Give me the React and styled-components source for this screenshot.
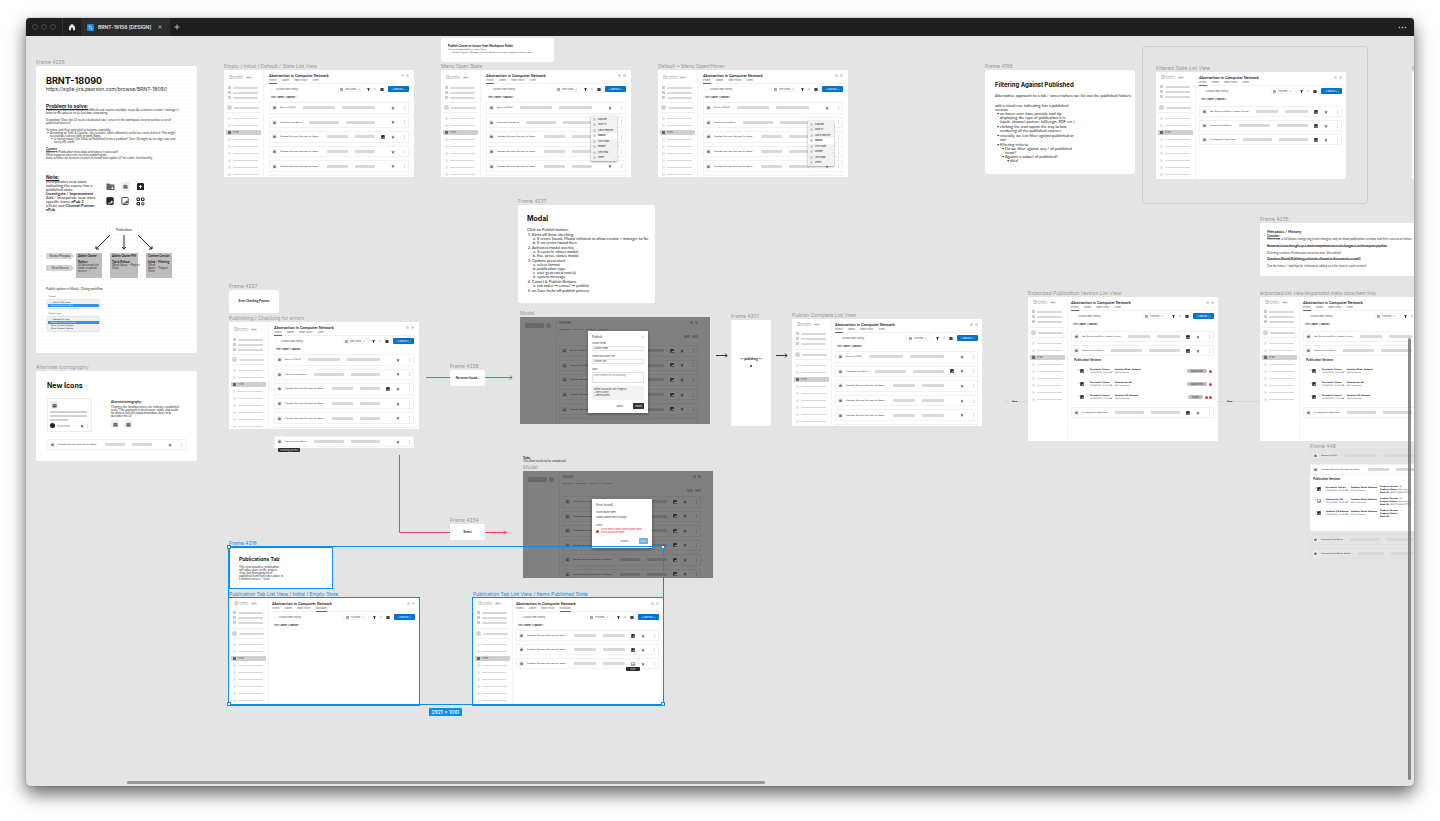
import React from "react";
import styled, { createGlobalStyle, css } from "styled-components";

const INTER = `Inter, "Liberation Sans", sans-serif`;
const WIDE = `"DejaVu Sans", "Liberation Sans", sans-serif`;
const NOTE = `Lato, "Liberation Sans", sans-serif`;
const BLUE = "#0d8ce9";
const ACTION = "#0073cf";

const Global = createGlobalStyle`
  *, *::before, *::after { box-sizing: border-box; }
  body { margin: 0; background: #fff; font-family: ${INTER}; color: #222; }
  button, input, select, textarea { font-family: inherit; margin: 0; padding: 0; border: 0; border-radius: 0; background: none; color: inherit; appearance: none; }
  h1, h2, h3, p, ul, ol { margin: 0; padding: 0; font-weight: inherit; font-size: inherit; }
  svg { display: block; flex: none; }
`;

/* ---------- window ---------- */
const Page = styled.div`
  min-height: 100vh;
  display: flex;
  flex-direction: column;
  padding: 18px 26px 35px;
`;
const Window = styled.div`
  flex: 1;
  display: flex;
  flex-direction: column;
  border-radius: 4px;
  overflow: hidden;
  background: #e4e4e4;
  box-shadow: 0 0 1px rgba(0, 0, 0, 0.7), 0 8px 18px rgba(0, 0, 0, 0.6);
`;
const TitleBar = styled.header`
  height: 18px;
  flex: none;
  display: flex;
  align-items: stretch;
  background: #1e1e1e;
  color: #e6e6e6;
`;
const Lights = styled.div`
  display: flex;
  align-items: center;
  gap: 3px;
  padding: 0 6px;
  border-right: 1px solid #333;
`;
const Light = styled.button`
  && { width: 6px; height: 6px; border: 1px solid #484848; border-radius: 50%; }
`;
const BarButton = styled.button`
  width: ${(p) => p.$w || 18}px;
  display: flex;
  align-items: center;
  justify-content: center;
`;
const Tab = styled.div`
  display: flex;
  align-items: center;
  gap: 4px;
  width: 89px;
  padding: 0 8px 0 6px;
  background: #2c2c2c;
  font-size: 5px;
  font-weight: 600;
  line-height: 8px;
  white-space: nowrap;
`;
const TabClose = styled.button`
  margin-left: auto;
`;
const Spacer = styled.div`
  flex: 1;
`;
const Canvas = styled.main`
  flex: 1;
  position: relative;
  overflow: hidden;
`;
const ScrollY = styled.div`
  position: absolute;
  right: 3px;
  top: 302px;
  bottom: 6px;
  width: 3px;
  border-radius: 2px;
  background: rgba(110, 110, 110, 0.8);
`;
const ScrollX = styled.div`
  position: absolute;
  left: 101px;
  bottom: 2px;
  width: 46%;
  height: 3px;
  border-radius: 2px;
  background: #989898;
`;

/* ---------- nodes on the free canvas ---------- */
const Node = styled.section`
  position: absolute;
  left: ${(p) => p.$x}px;
  top: ${(p) => p.$y}px;
`;
const Label = styled.h2`
  && { font-size: 5px; }
  line-height: 8px;
  height: 8px;
  color: ${(p) => (p.$selected ? BLUE : "#999")};
  white-space: nowrap;
`;
const Card = styled.div`
  width: ${(p) => p.$w}px;
  height: ${(p) => p.$h}px;
  padding: ${(p) => p.$pad || "0"};
  border-radius: ${(p) => (p.$square ? 0 : 2)}px;
  background-color: #fff;
  overflow: hidden;
  ${(p) => p.$selected && css`outline: 1px solid ${BLUE}; outline-offset: -1px;`}
  ${(p) => p.$dots && css`
    background-image: radial-gradient(#fafafa 1px, transparent 1px);
    background-size: 4px 4px;
  `}
  ${(p) => p.$center && css`
    display: flex; flex-direction: column; align-items: center; justify-content: center; gap: 4px;
  `}
`;
const SectionArea = styled.div`
  width: 226px;
  height: 158px;
  padding: 17px 13px;
  border: 1px solid #cdcdcd;
  border-radius: 4px;
`;
const Heading = styled.h1`
  && { font-size: ${(p) => p.$size}px; font-weight: 700; }
  line-height: ${(p) => p.$line || 10}px;
  white-space: nowrap;
  color: #111;
`;
const Url = styled.a`
  display: block;
  font-size: 5px;
  line-height: 7px;
  color: #333;
  text-decoration: none;
  white-space: nowrap;
`;
const Sub = styled.h3`
  && { font-size: 5px; font-weight: 700; }
  line-height: 6px;
  text-decoration: underline;
  color: #222;
`;
const Tiny = styled.p`
  && { font-size: ${(p) => (p.$dense ? 2 : 3)}px; }
  font-family: ${(p) => (p.$dense ? WIDE : NOTE)};
  line-height: 3px;
  margin-bottom: ${(p) => p.$after || 0}px;
  font-weight: ${(p) => (p.$bold ? 700 : 400)};
  text-decoration: ${(p) => (p.$strike ? "line-through" : p.$under ? "underline" : "none")};
  text-decoration-color: #888;
  color: ${(p) => (p.$bold ? "#111" : "#333")};
  white-space: nowrap;
`;
const Small = styled.div`
  font-size: 4px;
  line-height: 4px;
  font-family: ${NOTE};
  color: #222;
  white-space: nowrap;
  margin-bottom: ${(p) => p.$after || 0}px;
`;
const bullets = css`
  list-style: none;
  > li { position: relative; }
  > li::before { content: "•"; position: absolute; left: -3px; }
`;
const TinyList = styled.ul`
  ${bullets}
  && { padding-left: 4px; font-size: ${(p) => (p.$dense ? 2 : 3)}px; }
  font-family: ${(p) => (p.$dense ? WIDE : NOTE)};
  line-height: 3px;
  margin-bottom: ${(p) => p.$after || 0}px;
  white-space: nowrap;
  color: #333;
`;
const SmallList = styled.ul`
  ${bullets}
  && { padding-left: 5px; }
  li { margin-bottom: ${(p) => p.$gap || 0}px; }
  li li { margin-bottom: 0; }
`;
const Steps = styled.ol`
  && { padding-left: 5px; list-style-type: ${(p) => p.$type || "decimal"}; }
  > li { padding-top: ${(p) => (p.$type ? 0 : 1)}px; }
`;

/* ---------- icons ---------- */
const Bag = ({ s = 3, c = "#555" }) => (
  <svg width={s} height={s} viewBox="0 0 12 12"><path d="M4 3V1.500h4V3h3v7.500H1V3zm1 0h2v-.6H5z" fill={c} /><path d="M1 6.500h10" stroke="#fff" strokeWidth=".8" /></svg>
);
const Book = ({ s = 4, c = "#222", outline }) => (
  <svg width={s} height={s} viewBox="0 0 12 12">
    <rect x="1.200" y=".8" width="9.600" height="10.400" rx="1" fill={outline ? "#fff" : c} stroke={c} strokeWidth="1.200" />
    <path d="M3 9.200h4.500M8.500 5.500v4M6.500 7.500h4" stroke={outline ? c : "#fff"} strokeWidth="1.200" fill="none" />
  </svg>
);
const Star = ({ s = 4, c = "#777" }) => (
  <svg width={s} height={s} viewBox="0 0 12 12"><path d="M6 .8l1.600 3.400 3.700.5-2.700 2.600.7 3.700L6 9.200 2.700 11l.7-3.700L.7 4.700l3.700-.5z" fill={c} /></svg>
);
const Dots = ({ c = "#999" }) => (
  <svg width="3" height="4" viewBox="0 0 6 8"><g fill={c}><circle cx="3" cy="1.200" r=".9" /><circle cx="3" cy="4" r=".9" /><circle cx="3" cy="6.800" r=".9" /></g></svg>
);
const Funnel = () => (
  <svg width="3" height="3" viewBox="0 0 12 12"><path d="M0 1h12L7.500 6.500V12h-3V6.500z" fill="#111" /></svg>
);
const Cam = () => (
  <svg width="4" height="3" viewBox="0 0 12 9"><rect x="1" width="10" height="9" rx="1" fill="#444" /></svg>
);
const Cross = ({ s = 4, c = "#ccc" }) => (
  <svg width={s} height={s} viewBox="0 0 10 10"><path d="M1 1l8 8M9 1l-8 8" stroke={c} strokeWidth="1.500" /></svg>
);
const Plus = () => (
  <svg width="6" height="6" viewBox="0 0 12 12"><path d="M6 1v10M1 6h10" stroke="#ddd" strokeWidth="1.600" /></svg>
);
const Home = () => (
  <svg width="8" height="8" viewBox="0 0 16 16"><path d="M8 1.500L2 7v7.500h4V10h4v4.500h4V7z" fill="#e0e0e0" /></svg>
);
const FileIcon = () => (
  <svg width="7" height="7" viewBox="0 0 14 14"><rect width="14" height="14" rx="2" fill={BLUE} /><path d="M3.500 3.500h3v3h-3zM7.500 8h3v3h-3z" fill="#cde8ff" /><path d="M4 10.500L10 4" stroke="#cde8ff" strokeWidth="1.200" /></svg>
);

/* ---------- miniature application ---------- */
const Mini = styled.div`
  display: flex;
  width: 190px;
  height: ${(p) => p.$h || 107}px;
  overflow: hidden;
  background: #fff;
  ${(p) => p.$selected && css`outline: 1px solid ${BLUE};`}
`;
const Side = styled.aside`
  flex: none;
  width: 40px;
  padding: ${(p) => (p.$tight ? 3 : 5)}px 2px 0 2px;
  border-right: 1px solid #f4f4f4;
`;
const Logo = styled.div`
  display: flex;
  align-items: center;
  gap: 2px;
  height: 5px;
  padding-left: 3px;
  font-family: Lato, sans-serif;
  font-size: 5px;
  font-weight: 300;
  line-height: 5px;
  color: #666;
`;
const Beta = styled.span`
  padding: 0 1px;
  background: #eee;
  font-size: 2px;
  line-height: 3px;
  font-weight: 700;
  color: #777;
`;
const NavGroup = styled.div`
  display: flex;
  flex-direction: column;
  gap: 2px;
  padding: ${(p) => p.$pad};
  border-bottom: ${(p) => (p.$last ? 0 : 1)}px solid #eee;
`;
const NavItem = styled.div`
  display: flex;
  align-items: center;
  gap: 2px;
  height: ${(p) => (p.$slim ? 3 : 5)}px;
  padding-left: ${(p) => (p.$large ? 1 : 2)}px;
  font-size: 2px;
  line-height: 3px;
  color: #333;
  background: ${(p) => (p.$active ? "#cfcfcf" : "none")};
  border-radius: 1px;
`;
const NavMark = styled.i`
  width: ${(p) => p.$s}px;
  height: ${(p) => p.$s}px;
  border-radius: ${(p) => (p.$round ? "50%" : "0")};
  background: ${(p) => p.$c};
`;
const NavBar = styled.i`
  width: 25px;
  height: ${(p) => (p.$thick ? 2 : 1)}px;
  border-radius: 1px;
  background: #d8d8d8;
`;
const Content = styled.div`
  flex: 1;
  min-width: 0;
  padding: ${(p) => (p.$wide ? "3px 4px 0 3px" : "3px 5px 0")};
`;
const TopLine = styled.div`
  display: flex;
  align-items: center;
  gap: 2px;
  height: 5px;
`;
const AppTitle = styled.h3`
  && { flex: 1; font-size: 4px; font-weight: 500; }
  font-family: Roboto, sans-serif;
  line-height: 5px;
  white-space: nowrap;
  color: #111;
`;
const Dot = styled.i`
  width: 3px;
  height: 3px;
  border-radius: 50%;
  background: ${(p) => p.$c || "#d4d4d4"};
`;
const Tabs = styled.nav`
  display: flex;
  gap: 5px;
  height: 6px;
  border-bottom: 1px solid #f0f0f0;
`;
const TabLink = styled.a`
  height: 6px;
  font-size: 2px;
  line-height: 5px;
  white-space: nowrap;
  text-decoration: none;
  color: #555;
  border-bottom: 1px solid ${(p) => (p.$on ? "#666" : "transparent")};
`;
const Tools = styled.div`
  display: flex;
  align-items: center;
  gap: 4px;
  height: 6px;
  margin-top: 2px;
  padding-left: 2px;
  font-size: 2px;
  line-height: 4px;
  white-space: nowrap;
  color: #555;
`;
const Crumb = styled.span`
  flex: 1;
`;
const SortButton = styled.button`
  && { display: flex; align-items: center; gap: 2px; width: 26px; height: 6px; padding: 0 2px; border: 1px solid #f6f6f6; font-size: 2px; line-height: 4px; }
`;
const LoadButton = styled.button`
  && { width: 21px; height: 6px; background: ${ACTION}; color: #fff; font-size: 2px; line-height: 6px; border-radius: 1px; }
`;
const Columns = styled.div`
  display: flex;
  align-items: center;
  gap: 1px;
  height: 4px;
  margin-top: 3px;
  padding-left: 2px;
  font-size: 2px;
  line-height: 4px;
  font-weight: 700;
  white-space: nowrap;
  color: #222;
`;
const List = styled.div`
  display: flex;
  flex-direction: column;
  gap: 3px;
  margin-top: ${(p) => (p.$low ? 5 : 3)}px;
  height: ${(p) => (p.$full ? "84px" : "auto")};
`;
const Row = styled.div`
  flex: 1 0 auto;
  display: flex;
  align-items: center;
  min-height: 11px;
  padding: 0 2px;
  border: 1px solid ${(p) => (p.$dim ? "#787878" : p.$flat ? "#dfdfdf" : "#f1f1f1")};
  background: ${(p) => (p.$dim || p.$flat ? "transparent" : "#fff")};
`;
const IconBox = styled.span`
  display: flex;
  align-items: center;
  justify-content: center;
  width: ${(p) => p.$s || 5}px;
  height: ${(p) => p.$s || 5}px;
  background: ${(p) => (p.$dim ? "#757575" : "#f0f0f0")};
`;
const Name = styled.span`
  margin-left: 3px;
  font-family: ${WIDE};
  font-size: 2px;
  line-height: 3px;
  white-space: nowrap;
  color: #222;
`;
const Bar = styled.i`
  flex: 1;
  height: 3px;
  margin-left: 7px;
  border-radius: 1px;
  background: ${(p) => (p.$dim ? "#6c6c6c" : "#d8d8d8")};
`;
const Slot = styled.span`
  display: flex;
  justify-content: ${(p) => (p.$end ? "flex-end" : "center")};
  width: ${(p) => p.$w}px;
`;

const LONG = "President Business Business for Gener...";

function ListRow({ name, pub, dim, flat, outline }) {
  return (
    <Row $dim={dim} $flat={flat}>
      <IconBox $dim={dim}><Bag c={dim ? "#333" : "#555"} /></IconBox>
      <Name>{name}</Name>
      <Bar $dim={dim} />
      <Bar $dim={dim} />
      <Slot $w={16}>{pub && <Book outline={outline} />}</Slot>
      <Slot $w={4}><Star c={dim ? "#444" : "#777"} /></Slot>
      <Slot $w={11} $end><Dots c={dim ? "#444" : "#999"} /></Slot>
    </Row>
  );
}

function Sidebar({ tight }) {
  return (
    <Side $tight={tight}>
      <Logo>Bronte <Beta>BETA</Beta></Logo>
      <NavGroup $pad={tight ? "5px 0 4px" : "6px 0 3px"}>
        {[0, 1, 2].map((i) => (
          <NavItem key={i} $slim><NavMark $s={3} $c="#ccc" /><NavBar $thick /></NavItem>
        ))}
      </NavGroup>
      <NavGroup $pad="2px 0">
        <NavItem $large><NavMark $s={5} $round $c="#d4d4d4" /><NavBar $thick /></NavItem>
      </NavGroup>
      <NavGroup $last $pad="3px 0 0">
        {[0, 1, 2, 3, 4, 5, 6, 7, 8].map((i) =>
          i === 2 ? (
            <NavItem key={i} $active><NavMark $s={3} $c="#666" />IT Pro</NavItem>
          ) : (
            <NavItem key={i}><NavMark $s={3} $round $c="#e4e4e4" /><NavBar /></NavItem>
          )
        )}
      </NavGroup>
    </Side>
  );
}

function MiniApp({ h, tight, selected, sort = "Date Added", tab = "Projects", full, low, children }) {
  const tabs = ["Projects", "Classes", "Import History", tab === "Publications" ? tab : "Assets"];
  return (
    <Mini $h={h} $selected={selected}>
      <Sidebar tight={tight} />
      <Content $wide={tight}>
        <TopLine><AppTitle>Abstraction in Computer Network</AppTitle><Dot /><Dot /></TopLine>
        <Tabs>{tabs.map((t) => <TabLink key={t} href="#" $on={t === tab}>{t}</TabLink>)}</Tabs>
        <Tools>
          <span>‹</span>
          <Crumb>Australia Team Training</Crumb>
          <SortButton><NavMark $s={3} $c="#aaa" />{sort}<span>↓</span></SortButton>
          <Funnel />
          <NavMark $s={2} $c="#ddd" />
          <Cam />
          <LoadButton>+ Load Bulk | ⌄</LoadButton>
        </Tools>
        <Columns><span>Title</span><span>| Owner</span><span>| Updated ↓</span></Columns>
        <List $full={full} $low={low}>{children}</List>
      </Content>
    </Mini>
  );
}

function DefaultRows({ pubAt = -1 }) {
  return (
    <>
      {["Basics of TCP/IP", "Command Line Basics", LONG, LONG, LONG].map((n, i) => (
        <ListRow key={i} name={n} pub={i === pubAt} />
      ))}
      <Row />
    </>
  );
}

/* ---------- menu, tooltip, dialogs ---------- */
const Menu = styled.div`
  position: absolute;
  left: ${(p) => p.$x}px;
  top: ${(p) => p.$y}px;
  width: 26px;
  height: 46px;
  padding: 2px 0 1px;
  display: flex;
  flex-direction: column;
  justify-content: space-between;
  background: #f1f1f1;
  box-shadow: 0 1px 2px rgba(0, 0, 0, 0.4);
`;
const MenuItem = styled.button`
  && {
    display: flex; align-items: center; gap: 2px;
    height: ${(p) => (p.$on ? 6 : 5)}px;
    padding-left: 2px;
    font-size: 2px;
    line-height: 3px;
    white-space: nowrap;
    background: ${(p) => (p.$on ? "#fff" : "none")};
    font-weight: ${(p) => (p.$on ? 700 : 400)};
  }
`;
const Tooltip = styled.div`
  position: absolute;
  left: ${(p) => p.$x}px;
  top: ${(p) => p.$y}px;
  width: ${(p) => p.$w}px;
  height: 4px;
  background: #2b2b2b;
  color: #ddd;
  font-size: 2px;
  line-height: 4px;
  text-align: center;
  white-space: nowrap;
  border-radius: 1px;
`;
const FlyoutMenu = ({ x, y }) => (
  <Menu $x={x} $y={y}>
    {["Duplicate", "Move To", "Add to Favorites", "Publish", "Sync Folder", "Rename", "View Email", "Delete"].map((t) => (
      <MenuItem key={t} $on={t === "Publish"}><Dot $c="#ccc" />{t}</MenuItem>
    ))}
  </Menu>
);
const DimApp = styled.div`
  display: flex;
  width: 190px;
  height: 107px;
  overflow: hidden;
  background: #808080;
`;
const DimSide = styled.div`
  flex: none;
  display: flex;
  gap: 2px;
  width: 37px;
  height: 107px;
  padding: 6px 0 0 5px;
  border-right: 1px solid #7a7a7a;
`;
const Block = styled.i`
  width: ${(p) => p.$w}px;
  height: ${(p) => p.$h}px;
  border-radius: ${(p) => p.$r || 1}px;
  background: #686868;
`;
const DimMain = styled.div`
  flex: 1;
  min-width: 0;
  padding: 4px 12px 0 2px;
`;
const DimLine = styled.div`
  display: flex;
  gap: 2px;
  justify-content: ${(p) => p.$justify || "flex-start"};
  margin-bottom: ${(p) => p.$after}px;
`;
const DimList = styled.div`
  display: flex;
  flex-direction: column;
  gap: 3px;
  height: 84px;
`;
const Dialog = styled.div`
  position: absolute;
  left: ${(p) => p.$x}px;
  top: ${(p) => p.$y}px;
  width: 60px;
  height: ${(p) => p.$h}px;
  padding: 4px;
  display: flex;
  flex-direction: column;
  gap: ${(p) => p.$gap || 0}px;
  background: #fff;
  box-shadow: 0 1px 3px rgba(0, 0, 0, 0.4);
  font-size: 2px;
  line-height: 4px;
  color: #333;
`;
const DialogHead = styled.div`
  display: flex;
  justify-content: space-between;
  align-items: center;
  font-size: 3px;
  line-height: 4px;
  margin-bottom: 2px;
`;
const Field = styled.label`
  display: flex;
  flex-direction: column;
  gap: 1px;
  margin-bottom: 3px;
`;
const Select = styled.select`
  && { height: 5px; padding: 0 1px; border: 1px solid #e4e4e4; font-size: 2px; line-height: 3px; }
`;
const Notes = styled.textarea`
  && { height: 11px; padding: 1px; border: 1px solid #e4e4e4; font-size: 2px; line-height: 3px; resize: none; }
`;
const Hint = styled.div`
  flex: none;
  height: 14px;
  padding: 2px;
  background: #f2f2f2;
  line-height: 3px;
  white-space: nowrap;
`;
const Actions = styled.div`
  display: flex;
  justify-content: flex-end;
  gap: 8px;
  margin-top: auto;
`;
const DialogButton = styled.button`
  && { height: 6px; padding: 0 2px; font-size: 2px; line-height: 6px; background: ${(p) => p.$bg || "none"}; color: ${(p) => (p.$bg ? "#fff" : "#333")}; }
`;
const Fault = styled.div`
  display: flex;
  gap: 2px;
  align-items: center;
  line-height: 3px;
  white-space: nowrap;
  color: #d33;
`;

function DimmedList({ names, last }) {
  return (
    <DimApp>
      <DimSide><Block $w={19} $h={5} /><Block $w={5} $h={5} $r={3} /></DimSide>
      <DimMain>
        <DimLine $after={5}><Block $w={12} $h={3} /><Spacer /><Dot $c="#666" /><Dot $c="#666" /></DimLine>
        <DimLine $after={5}>{[0, 1, 2, 3].map((i) => <Block key={i} $w={11} $h={1} />)}</DimLine>
        <DimLine $justify="flex-end" $after={last ? 4 : 7}><Block $w={6} $h={3} /><Block $w={6} $h={3} /></DimLine>
        <DimList>
          {names.map((n, i) => <ListRow key={i} name={n} dim pub />)}
          {last || <Row $dim />}
        </DimList>
      </DimMain>
    </DimApp>
  );
}

/* ---------- publication versions ---------- */
const Versions = styled.div`
  display: flex;
  flex-direction: column;
  gap: ${(p) => (p.$dense ? 4 : 5)}px;
  padding: 0 2px 3px 3px;
  font-size: 2px;
  line-height: 3px;
  white-space: nowrap;
`;
const VersionsTitle = styled.h3`
  && { font-size: 3px; font-weight: 700; }
  font-family: ${NOTE};
  line-height: 3px;
`;
const Version = styled.div`
  display: flex;
  align-items: center;
  gap: ${(p) => (p.$dense ? 3 : 4)}px;
  height: 8px;
  padding-left: ${(p) => (p.$dense ? 2 : 4)}px;
`;
const VersionIcon = styled.span`
  display: flex;
  gap: 1px;
  width: 8px;
`;
const VersionCell = styled.div`
  flex: none;
  width: ${(p) => p.$w}px;
  font-family: ${WIDE};
  color: #444;
  b { color: #111; }
`;
const Pill = styled.span`
  margin-left: auto;
  padding: 0 4px;
  border-radius: 2px;
  background: #bdbdbd;
  line-height: 4px;
`;
const Alerts = styled.span`
  display: flex;
  gap: 1px;
  margin-left: -2px;
`;
const VERSIONS = [
  ["Ricardo E. Galvez", "Another Minor Release", "COMPLETED", 1],
  ["Ricardo E. Galvez", "Release for QA", "COMPLETED", 1],
  ["Ricardo E. Galvez", "Another QA Release", "FAILED", 2],
];
const META_VERSIONS = [
  ["Ricardo E. Galvez", "Another Minor Release"],
  ["Release for QA", "Another Minor Release"],
  ["Another QA Release", "Another Minor Release"],
];
const META = [
  ["v4", "Getting pro...", "BRNT-12345LOFTMR"],
  ["v4", "Getting pro...", "BRNT-12345LOFTMR"],
  ["—", "—", "—"],
];
function VersionList({ status, meta }) {
  return (
    <Versions $dense={meta}>
      <VersionsTitle>Publication Versions</VersionsTitle>
      {(meta ? META_VERSIONS : VERSIONS).map(([who, title, state, n], i) => (
        <Version key={i} $dense={meta}>
          <VersionIcon>{3 - i}<Book outline={meta && i === 1} /></VersionIcon>
          <VersionCell $w={meta ? 22 : 21}><b>{who}</b><br />05/29/2022, 10:32 AM</VersionCell>
          <VersionCell $w={26}><b>{title}</b><br />Will Fortescue</VersionCell>
          {meta && (
            <VersionCell $w={34}>
              <b>Product Version:</b> {META[i][0]}<br /><b>Product Status:</b> {META[i][1]}<br /><b>Book ID:</b> {META[i][2]}
            </VersionCell>
          )}
          {status && <Pill>{state}</Pill>}
          {status && <Alerts>{Array.from({ length: n }, (_, k) => <Dot key={k} $c="#e0393e" />)}</Alerts>}
        </Version>
      ))}
    </Versions>
  );
}
const Meta448 = styled.div`
  width: 141px;
  display: flex;
  flex-direction: column;
  gap: 3px;
`;
const Tray = styled.div`
  height: 67px;
  display: flex;
  flex-direction: column;
  gap: 3px;
  background: #fff;
  > div:first-child { flex: none; }
`;

/* ---------- brief document ---------- */
const NoteGrid = styled.div`
  display: flex;
  gap: 10px;
  margin-top: 14px;
`;
const NoteText = styled.div`
  width: 50px;
`;
const IconGrid = styled.div`
  display: grid;
  grid-template-columns: 9px 9px 9px;
  gap: 6px;
  margin-top: 8px;
  align-content: start;
`;
const Flow = styled.div`
  display: grid;
  grid-template-columns: 28px 96px;
  column-gap: 2px;
`;
const FlowTop = styled.div`
  grid-column: 2;
  display: flex;
  flex-direction: column;
  align-items: center;
`;
const FlowTitle = styled.div`
  width: 28px;
  height: 8px;
  font-family: ${NOTE};
  font-size: 3px;
  line-height: 8px;
  text-align: center;
  box-shadow: 0 0 2px rgba(0, 0, 0, 0.08);
`;
const FlowTags = styled.div`
  display: flex;
  flex-direction: column;
  gap: 6px;
`;
const FlowTag = styled.div`
  height: 6px;
  background: #d4d4d4;
  clip-path: polygon(0 0, 90% 0, 100% 50%, 90% 100%, 0 100%);
  font-size: 3px;
  line-height: 6px;
  font-family: ${NOTE};
  text-align: center;
`;
const FlowBoxes = styled.div`
  display: flex;
  gap: 8px;
`;
const FlowBox = styled.div`
  width: ${(p) => p.$w || 26}px;
  height: 25px;
  padding: 2px;
  background: #bdbdbd;
`;
const Picker = styled.div`
  width: 51px;
  margin: 0 0 4px 2px;
  padding: 1px 0;
  border-radius: 1px;
  background: #f0f0f0;
  box-shadow: 0 0 2px rgba(0, 0, 0, 0.35);
`;
const PickerOption = styled.div`
  padding-left: 3px;
  font-family: ${WIDE};
  font-size: 2px;
  line-height: 3px;
  background: ${(p) => (p.$on ? "#2f94e6" : "none")};
  color: ${(p) => (p.$on ? "#fff" : "#222")};
`;
const IconsRow = styled.div`
  display: flex;
  gap: 19px;
  margin: 7px 0;
`;
const Tile = styled.div`
  width: 45px;
  height: 34px;
  padding: 2px;
  display: flex;
  flex-direction: column;
  gap: 2px;
  border: 1px solid #eee;
`;
const TileFoot = styled.div`
  display: flex;
  align-items: center;
  gap: 2px;
`;
const TileBar = styled.i`
  width: ${(p) => p.$w}px;
  height: 2px;
  background: #d0d0d0;
`;
const TileCopy = styled.div`
  width: 68px;
  padding-top: 3px;
`;
const BoxPair = styled.div`
  display: flex;
  gap: 5px;
  margin-top: 2px;
`;

function Brief() {
  return (
    <Card $w={161} $h={287} $pad="10px 9px 0 10px" $dots>
      <Heading $size={9}>BRNT-18090</Heading>
      <Url href="https://agile-jira.pearson.com/browse/BRNT-18090">https://agile-jira.pearson.com/browse/BRNT-18090</Url>
      <Small $after={6}>{"\u00a0"}</Small>
      <Sub>Problem to solve:</Sub>
      <Tiny>Publishing a Course or Lesson is difficult and requires multiple steps. As a content creator / manager, I</Tiny>
      <Tiny $after={4}>want to this process to be less time consuming.</Tiny>
      <Tiny>Secondary: Does the UI need a dedicated tab / screen in the workspace view to surface a set of</Tiny>
      <Tiny $after={4}>published courses?</Tiny>
      <Tiny>Versions, and their potential to become unwieldy:</Tiny>
      <TinyList $after={4}>
        <li>According to Trish &amp; Caroline, the versions, while ultimately useful are rarely deleted. This might<br />necessitate cultural shift in work flows.
          <TinyList>
            <li>Is having many (10s-100s) of Published items a problem? Over 50 might be an edge case and<br />rarely the norm.</li>
          </TinyList>
        </li>
      </TinyList>
      <Tiny $bold $under>Caveats:</Tiny>
      <Tiny>Where is Publication meta data and how is it accessed?</Tiny>
      <Tiny>What happens when we need to publish again</Tiny>
      <Tiny>more reliance on content creators to know and explore UI for subtle functionality</Tiny>
      <NoteGrid>
        <NoteText>
          <Sub>Note:</Sub>
          <Small>
            Incorporates new icons<br />indicating the course has a<br />published state.<br />
            <b>Investigate / Improvement</b><br />Add / incorporate new more<br />specific icons: <b>ePub 3</b><br />
            (eText) and <b>Channel Partner</b><br /><b>ePub</b>
          </Small>
        </NoteText>
        <IconGrid>
          <svg width="9" height="9" viewBox="0 0 18 18"><path d="M1 3h6l2 2h8v11H1z" fill="#666" /><path d="M12 8l3 6h-4z" fill="#fff" /></svg>
          <IconBox $s={9}><Bag s={5} /></IconBox>
          <svg width="9" height="9" viewBox="0 0 18 18"><path d="M3 2h12l1 3v11H2V5z" fill="#222" /><path d="M9 6l4 4H5zM8 9h2v4H8z" fill="#fff" /></svg>
          <Book s={8} />
          <Book s={8} outline />
          <svg width="9" height="9" viewBox="0 0 18 18"><g fill="none" stroke="#222" strokeWidth="2"><path d="M2 2h5v5H2zM11 2h5v5h-5zM2 11h5v5H2z" /><circle cx="13.500" cy="13.500" r="2.500" /></g></svg>
        </IconGrid>
      </NoteGrid>
      <Small $after={10}>{"\u00a0"}</Small>
      <Flow>
        <FlowTop>
          <FlowTitle>Publications</FlowTitle>
          <svg width="62" height="19" viewBox="0 0 62 19" fill="none" stroke="#222" strokeWidth="1">
            <path d="M17 1L3 15M3 12v3h3M31 1v14M29 13l2 2 2-2M45 1l14 14M56 15h3v-3" />
          </svg>
        </FlowTop>
        <FlowTags><FlowTag>Viewer/Purpose</FlowTag><FlowTag>View/Screen</FlowTag></FlowTags>
        <FlowBoxes>
          <FlowBox><Tiny $bold $after={3}>Admin Owner</Tiny><Tiny $bold>Rollout</Tiny><Tiny>UI Accessed via<br />some separate<br />screen</Tiny></FlowBox>
          <FlowBox $w={28}><Tiny $bold $after={3}>Admin Owner PM</Tiny><Tiny $bold>Tab &amp; Rollout</Tiny><Tiny>Work Space - Project<br />View</Tiny></FlowBox>
          <FlowBox><Tiny $bold $after={3}>Content Creator</Tiny><Tiny $bold>Inline / Filtering</Tiny><Tiny>Work<br />Space - Project<br />View</Tiny></FlowBox>
        </FlowBoxes>
      </Flow>
      <Small $after={6}>{"\u00a0"}</Small>
      <Tiny $after={4}>Publish options in Modal / Dialog workflow</Tiny>
      <Tiny $dense $after={2}>{"\u00a0\u00a0\u00a0\u00a0"}Format</Tiny>
      <Picker><PickerOption>✓ ePub 3 (No save)</PickerOption><PickerOption $on>Channel Partner ePub</PickerOption></Picker>
      <Tiny $dense $after={2}>{"\u00a0\u00a0\u00a0\u00a0"}Publish type</Tiny>
      <Picker>
        <PickerOption>✓ Release for Live</PickerOption>
        <PickerOption $on>Release for QA (no save)</PickerOption>
        <PickerOption>Minor Content Update</PickerOption>
        <PickerOption>Major Content Update</PickerOption>
      </Picker>
    </Card>
  );
}

function Iconography() {
  return (
    <Card $w={161} $h={90} $pad="10px 11px">
      <Heading $size={7}>New Icons</Heading>
      <IconsRow>
        <Tile>
          <IconBox $s={8}><Bag s={5} /></IconBox>
          <TileBar $w={37} /><TileBar $w={37} /><TileBar $w={18} />
          <TileFoot><NavMark $s={5} $round $c="#222" /><TileBar $w={13} /><Spacer /><Star /><Dots /></TileFoot>
        </Tile>
        <TileCopy>
          <Tiny $bold $after={2}>Alternate Iconography:</Tiny>
          <Tiny>Changes the location where we indicate a published<br />scale. This approach is much more subtle and could<br />be missed, but this implementation, does help<br />declutter the UI</Tiny>
          <BoxPair><IconBox $s={8}><Bag s={5} /></IconBox><IconBox $s={8}><Bag s={5} /></IconBox></BoxPair>
        </TileCopy>
      </IconsRow>
      <ListRow name={LONG} />
    </Card>
  );
}

/* ---------- arrows between frames ---------- */
const Connectors = styled.svg`
  position: absolute;
  left: 0;
  top: 0;
`;

/* ---------- selection ---------- */
const Selection = styled.div`
  position: absolute;
  left: 202px;
  top: 510px;
  width: 436px;
  height: 159px;
  border: 1px solid ${BLUE};
`;
const Handle = styled.i`
  position: absolute;
  ${(p) => p.$v}: -2px;
  ${(p) => p.$h}: -2px;
  width: 4px;
  height: 4px;
  border: 1px solid ${BLUE};
  background: #fff;
`;
const SizeBadge = styled.div`
  position: absolute;
  left: 403px;
  top: 672px;
  width: 33px;
  height: 8px;
  border-radius: 1px;
  background: ${BLUE};
  color: #fff;
  font-size: 5px;
  font-weight: 500;
  line-height: 8px;
  text-align: center;
  white-space: nowrap;
`;

export default function App() {
  return (
    <Page>
      <Global />
      <Window>
        <TitleBar>
          <Lights>
            <Light aria-label="Close" /><Light aria-label="Minimize" /><Light aria-label="Zoom" />
          </Lights>
          <BarButton aria-label="Home"><Home /></BarButton>
          <Tab><FileIcon />BRNT-19156 [DESIGN]<TabClose aria-label="Close tab"><Cross /></TabClose></Tab>
          <BarButton $w={14} aria-label="New tab"><Plus /></BarButton>
          <Spacer />
          <BarButton $w={24} aria-label="More">
            <svg width="9" height="3" viewBox="0 0 9 3"><g fill="#ccc"><circle cx="1.500" cy="1.500" r=".8" /><circle cx="4.500" cy="1.500" r=".8" /><circle cx="7.500" cy="1.500" r=".8" /></g></svg>
          </BarButton>
        </TitleBar>
        <Canvas>
          <Connectors width="1388" height="750" fill="none" strokeWidth="1">
            <path d="M400 341.500h86M484 339.500l2 2-2 2" stroke="#3f9e63" />
            <path d="M373.500 419v77.500h107M478 494.500l2 2-2 2" stroke="#ee4455" />
            <path d="M690 319.500h11M699 317.500l2 2-2 2M750 319.500h11M759 317.500l2 2-2 2" stroke="#333" />
            <path d="M978 365.500h24M1192 365.500h42" stroke="#d8d8d8" />
          </Connectors>

          <Node $x={10} $y={22}><Label>Frame 4229</Label><Brief /></Node>
          <Node $x={10} $y={327}><Label>Alternate Iconography</Label><Iconography /></Node>

          <Node $x={198} $y={26}>
            <Label>Empty / Initial / Default / State List View</Label>
            <MiniApp full><DefaultRows pubAt={2} /></MiniApp>
          </Node>
          <Node $x={415} $y={-6}>
            <Label>Frame 4200</Label>
            <Card $w={113} $h={24} $pad="7px">
              <Tiny $bold>Publish Course or Lesson from Workspace Folder</Tiny>
              <Tiny $dense>Utilizes the Kebab/Ellipsis menu flyout</Tiny>
              <TinyList $dense><li>Content Creator / Manager clicks on Kebab to activate / engage the flyout menu</li></TinyList>
            </Card>
          </Node>
          <Node $x={415} $y={26}>
            <Label>Menu Open State</Label>
            <MiniApp full><DefaultRows /></MiniApp>
            <FlyoutMenu x={150} y={53} />
          </Node>
          <Node $x={632} $y={26}>
            <Label>Default ~ Menu Open/Hover</Label>
            <MiniApp full><DefaultRows /></MiniApp>
            <FlyoutMenu x={150} y={58} />
          </Node>

          <Node $x={959} $y={26}>
            <Label>Frame 4198</Label>
            <Card $w={150} $h={104} $pad="10px">
              <Heading $size={6}>Filtering Against Published</Heading>
              <Small $after={6}>{"\u00a0"}<br />Alternative approach to a tab / screen where we list out the published folders;</Small>
              <Small>add a visual cue indicating has a published<br />version
                <SmallList $gap={1}>
                  <li>on hover over icon; provide tool tip<br />displaying the type of publication it is<br />(epub, channel partner, InDesign, PDF etc.)</li>
                  <li>clicking the icon opens the tray below,<br />rendering all the published courses</li>
                  <li>crucially, we can filter against published or<br />not</li>
                  <li>Filtering criteria:
                    <SmallList>
                      <li>Do we filter against any / all published<br />items?</li>
                      <li>Against a subset of published?
                        <SmallList><li>tbl.d</li></SmallList>
                      </li>
                    </SmallList>
                  </li>
                </SmallList>
              </Small>
            </Card>
          </Node>

          <Node $x={1116} $y={10}>
            <SectionArea>
              <Label>Filtered State List View</Label>
              <MiniApp tight low sort="Published">
                <ListRow name="Pen Testing and What it means for you" pub />
                <ListRow name="Command Line Basics" pub />
                <ListRow name="Cryptographic Algorithms" pub />
              </MiniApp>
            </SectionArea>
          </Node>
          <Node $x={1386} $y={28}><Label>M</Label><Card $w={190} $h={107} $square /></Node>

          <Node $x={492} $y={161}>
            <Label>Frame 4237</Label>
            <Card $w={137} $h={98} $pad="9px">
              <Heading $size={7}>Modal</Heading>
              <Small>{"\u00a0"}</Small>
              <Small>
                Click on Publish button:
                <Steps>
                  <li>Kicks off Error checking
                    <Steps $type="lower-alpha"><li>If errors found, Modal initiated to allow creator / manager to fix.</li><li>If no errors found then</li></Steps>
                  </li>
                  <li>Activates modal overlay
                    <Steps $type="lower-alpha"><li>X cancels; closes modal</li><li>Esc. press, closes modal</li></Steps>
                  </li>
                  <li>Options presented
                    <Steps $type="lower-alpha"><li>select format</li><li>publication type</li><li>user generated note(s)</li><li>system message</li></Steps>
                  </li>
                  <li>Cancel &amp; Publish Buttons
                    <Steps $type="lower-alpha"><li>tab order → cancel → publish</li></Steps>
                  </li>
                  <li>on Save kicks off publish process</li>
                </Steps>
              </Small>
            </Card>
          </Node>

          <Node $x={203} $y={246}>
            <Label>Frame 4227</Label>
            <Card $w={50} $h={23} $center><Tiny $bold>Error Checking Process</Tiny></Card>
          </Node>
          <Node $x={203} $y={278}>
            <Label>Publishing / Checking for errors</Label>
            <MiniApp full><DefaultRows pubAt={2} /></MiniApp>
          </Node>
          <Node $x={248} $y={400}>
            <Card $w={140} $h={12} $square><ListRow name="Command Line Basics" /></Card>
            <Tooltip $x={4} $y={12} $w={22}>Publishing process</Tooltip>
          </Node>

          <Node $x={424} $y={326}>
            <Label>Frame 4228</Label>
            <Card $w={35} $h={16} $center><Tiny $bold>No errors found...</Tiny></Card>
          </Node>
          <Node $x={424} $y={480}>
            <Label>Frame 4234</Label>
            <Card $w={35} $h={16} $center><Tiny $bold>Errors</Tiny></Card>
          </Node>

          <Node $x={494} $y={273}>
            <Label>Modal</Label>
            <DimmedList names={["Basics of TCP/IP", "Command Line Basics", LONG, LONG, LONG]} />
            <Dialog $x={68} $y={22} $h={82}>
              <DialogHead>Publish<Cross s={2} c="#777" /></DialogHead>
              <Field>Choose format<Select><option>Choose format</option></Select></Field>
              <Field>Choose publication type<Select><option>Choose type</option></Select></Field>
              <Field>Notes<Notes placeholder="Enter comment for this publishing" /></Field>
              <Hint>Before you publish, don't forget to:<br />• Select Author<br />• Refresh assets</Hint>
              <Actions><DialogButton>Cancel</DialogButton><DialogButton $bg="#333">Publish</DialogButton></Actions>
            </Dialog>
          </Node>
          <Node $x={705} $y={276}>
            <Label>Frame 4201</Label>
            <Card $w={40} $h={106} $square $center $pad="12px 0 34px"><Tiny $bold>&lt;&lt; publishing &gt;&gt;</Tiny><NavMark $s={2} $round $c="#333" /></Card>
          </Node>
          <Node $x={766} $y={275}>
            <Label>Publish Complete List View</Label>
            <MiniApp tight full sort="Published"><DefaultRows pubAt={1} /></MiniApp>
          </Node>

          <Node $x={986} $y={364}><Tiny $dense $bold>Flow</Tiny></Node>
          <Node $x={1201} $y={364}><Tiny $dense $bold>Flow</Tiny></Node>

          <Node $x={1002} $y={253}>
            <Label>Expanded Publication Version List View</Label>
            <MiniApp h={144} tight low sort="Published">
              <ListRow name="Pen Testing and What it means for you" pub />
              <ListRow name="Command Line Basics" pub />
              <VersionList status />
              <ListRow name="Cryptographic Algorithms" pub />
            </MiniApp>
          </Node>
          <Node $x={1234} $y={253}>
            <Label>expanded list view/expanded meta data/item tray</Label>
            <MiniApp h={144} tight low sort="Published">
              <ListRow name="Pen Testing and What it means for you" />
              <ListRow name="Command Line Basics" />
              <VersionList />
              <ListRow name="Cryptographic Algorithms" />
            </MiniApp>
          </Node>
          <Node $x={1234} $y={179}>
            <Label>Frame 4235</Label>
            <Card $w={200} $h={53} $pad="7px">
              <Small $after={1}><b>Metadata / History</b></Small>
              <Tiny $bold $under>Consider:</Tiny>
              <Tiny $after={4}>This is not a full blown change log (track changes) only to show publication versions and their success or failure</Tiny>
              <Tiny $bold $strike $after={4}>However, it was brought up a more comprehensive track changes is in the request pipeline</Tiny>
              <Tiny $after={3}>Deleting versions, Permissions associated w/ this action?</Tiny>
              <Tiny $bold $strike $after={4}>Question: Should Publishing action be allowed in this scenario as well?</Tiny>
              <Tiny>Can the hover / tool tips be eliminated, added as a line item in each version?</Tiny>
            </Card>
          </Node>
          <Node $x={1284} $y={406}>
            <Label>Frame 448</Label>
            <Meta448>
              <ListRow flat name="Networking 101" />
              <Tray><ListRow name={LONG} /><VersionList meta /></Tray>
              <ListRow flat name="Command Line Basics" />
              <ListRow flat name="Command Line Basics default" />
            </Meta448>
          </Node>

          <Node $x={497} $y={421}>
            <Tiny $bold>Todo:</Tiny>
            <Tiny>This flow needs to be completed</Tiny>
            <Label>Modal</Label>
            <DimmedList last names={[LONG, LONG, LONG, LONG, LONG, LONG]} />
            <Dialog $x={69} $y={42} $h={49} $gap={1}>
              <DialogHead>Error found!</DialogHead>
              <span>Course project name</span>
              <Field><span>Human Anatomy and Physiology</span></Field>
              <span>Author</span>
              <Fault><Dot $c="#d33" /><span>Author needs credits! Please update names<br />with a valid author name.</span></Fault>
              <Actions><DialogButton>CANCEL</DialogButton><DialogButton $bg="#6db3e8">FIX IT</DialogButton></Actions>
            </Dialog>
          </Node>

          <Node $x={203} $y={503}>
            <Label $selected>Frame 4216</Label>
            <Card $w={104} $h={42} $pad="8px 10px" $square $selected>
              <Heading $size={5} $line={8}>Publications Tab</Heading>
              <Tiny>{"\u00a0"}<br />This view assumes, publication<br />will takes place in the project<br />view, but management of<br />published items will takes place in<br />a distinct screen / view</Tiny>
            </Card>
          </Node>
          <Node $x={203} $y={554}>
            <Label $selected>Publication Tab List View / Initial / Empty State</Label>
            <MiniApp selected tight tab="Publications" sort="Published" />
          </Node>
          <Node $x={447} $y={554}>
            <Label $selected>Publication Tab List View / Items Published State</Label>
            <MiniApp selected tight tab="Publications" sort="Published">
              <ListRow name={LONG} pub />
              <ListRow name={LONG} pub />
              <ListRow name={LONG} pub outline />
            </MiniApp>
            <Tooltip $x={153} $y={77} $w={14}>ePub</Tooltip>
          </Node>

          <Selection>
            <Handle $v="top" $h="left" /><Handle $v="top" $h="right" />
            <Handle $v="bottom" $h="left" /><Handle $v="bottom" $h="right" />
          </Selection>
          <SizeBadge>2921 × 1061</SizeBadge>
          <ScrollY />
          <ScrollX />
        </Canvas>
      </Window>
    </Page>
  );
}
